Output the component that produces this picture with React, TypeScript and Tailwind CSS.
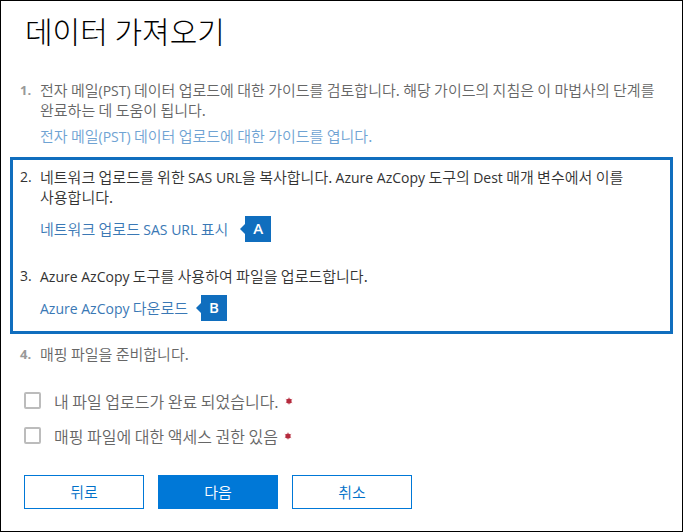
import type { ReactNode } from "react";

function Latin({ children }: { children: ReactNode }) {
  return <span className="font-['Open_Sans',sans-serif] text-sm leading-none font-normal">{children}</span>;
}

function Step({ number, faded = false, children }: { number: number; faded?: boolean; children: ReactNode }) {
  return (
    <div className="flex">
      <span
        className={
          faded
            ? "w-5 shrink-0 font-['Open_Sans',sans-serif] text-[13px] leading-5 font-bold text-[#999999]"
            : "w-5 shrink-0 font-['Open_Sans',sans-serif] text-sm leading-5 font-normal text-[#333333]"
        }
      >
        {number}.
      </span>
      <div className="min-w-0 flex-1">{children}</div>
    </div>
  );
}

function Callout({ letter }: { letter: string }) {
  return (
    <span className="flex items-center">
      <svg width="5" height="10" viewBox="0 0 5 10" aria-hidden="true">
        <path d="M5 0L0 5L5 10Z" fill="#106ebe" />
      </svg>
      <span className="flex size-[26px] items-center justify-center bg-[#106ebe] pb-0.5 font-['Open_Sans',sans-serif] text-[15px] leading-5 font-semibold text-white">
        {letter}
      </span>
    </span>
  );
}

function Check({ id, label }: { id: string; label: string }) {
  return (
    <div className="flex h-[35px] items-center">
      <input
        id={id}
        type="checkbox"
        required
        className="size-[17px] shrink-0 appearance-none rounded-[2px] border-2 border-[#bcbcbc] bg-white checked:bg-[#0078d7]"
      />
      <label htmlFor={id} className="ml-[13px] flex items-center text-base leading-5 text-[#666666]">
        {label}
        <svg className="ml-[6px]" width="8" height="8" viewBox="0 0 8 8" aria-hidden="true">
          <circle cx="4" cy="4" r="2.6" fill="#b52b3e" />
          <path d="M4 .5v7M.8 2.2l6.4 3.6M.8 5.8l6.4-3.6" stroke="#b52b3e" strokeOpacity=".6" />
        </svg>
      </label>
    </div>
  );
}

const outlined = "h-[34px] w-[120px] border border-[#0078d7] bg-white text-[15px] text-[#0070c8]";
const filled = "h-[34px] w-[120px] border border-[#0078d7] bg-[#0078d7] text-[15px] text-white";

export default function App() {
  return (
    <main className="border border-black bg-white px-[9px] pt-[11px] pb-[22px] font-['Noto_Sans_CJK_KR',sans-serif] text-[15px] leading-5 font-[350] break-keep">
      <h1 className="pl-[15px] font-['Noto_Sans_CJK_KR_Light','Noto_Sans_CJK_KR',sans-serif] text-[30px] leading-9 font-light text-black">
        데이터 가져오기
      </h1>

      <section className="mt-8 px-[10px]">
        <Step number={1} faded>
          <p className="text-[#666666]">
            전자 메일<Latin>(PST)</Latin> 데이터 업로드에 대한 가이드를 검토합니다. 해당 가이드의 지침은 이 마법사의 단계를 완료하는 데 도움이 됩니다.
          </p>
          <a href="#guide" className="mt-[6px] block text-[#6fa3d3]">
            전자 메일<Latin>(PST)</Latin> 데이터 업로드에 대한 가이드를 엽니다.
          </a>
        </Step>
      </section>

      <section className="mt-[11px] border-3 border-[#106ebe] px-[7px] pt-[7px] pb-[10px]">
        <Step number={2}>
          <p className="text-[#333333]">
            네트워크 업로드를 위한 <Latin>SAS URL</Latin>을 복사합니다. <Latin>Azure AzCopy</Latin> 도구의 <Latin>Dest</Latin> 매개 변수에서 이를 사용합니다.
          </p>
          <div className="mt-[9px] flex items-center gap-3">
            <a href="#sas-url" className="text-[#3a78b5]">
              네트워크 업로드 <Latin>SAS URL</Latin> 표시
            </a>
            <Callout letter="A" />
          </div>
        </Step>
        <div className="mt-6">
          <Step number={3}>
            <p className="text-[#333333]">
              <Latin>Azure AzCopy</Latin> 도구를 사용하여 파일을 업로드합니다.
            </p>
            <div className="mt-[9px] flex items-center gap-2">
              <a href="#azcopy" className="text-[#3a78b5]">
                <Latin>Azure AzCopy</Latin> 다운로드
              </a>
              <Callout letter="B" />
            </div>
          </Step>
        </div>
      </section>

      <section className="mt-[10px] px-[10px]">
        <Step number={4} faded>
          <p className="text-[#666666]">매핑 파일을 준비합니다.</p>
        </Step>
      </section>

      <form className="mt-[19px] px-[14px]" onSubmit={(e) => e.preventDefault()}>
        <Check id="upload-done" label="내 파일 업로드가 완료 되었습니다." />
        <Check id="mapping-access" label="매핑 파일에 대한 액세스 권한 있음" />
        <div className="mt-[22px] flex flex-wrap gap-[14px]">
          <button type="button" className={outlined}>뒤로</button>
          <button type="submit" className={filled}>다음</button>
          <button type="button" className={outlined}>취소</button>
        </div>
      </form>
    </main>
  );
}
